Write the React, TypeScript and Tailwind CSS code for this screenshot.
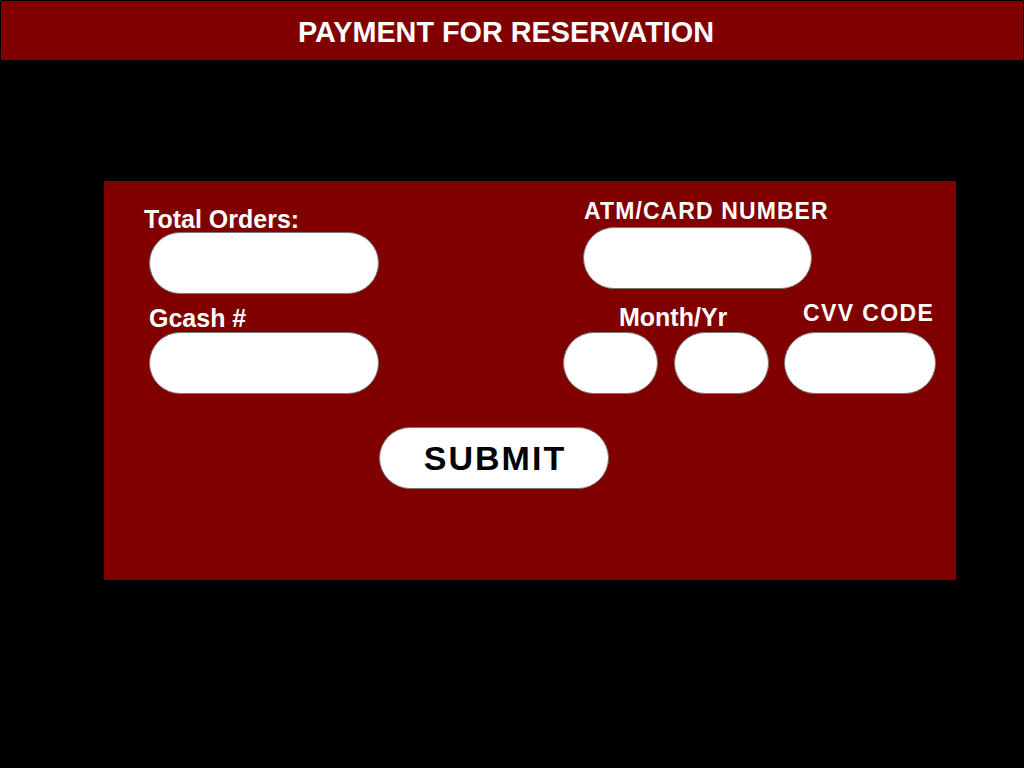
import React from "react";

const inputCls = "bg-white border border-[#777777] rounded-full h-[62px]";

export default function App() {
  return (
    <div
      className="w-[1024px] h-[768px] bg-black flex flex-col"
      style={{ fontFamily: '"Liberation Sans", Arial, sans-serif' }}
    >
      <header className="mx-px mt-px h-[59px] bg-[#800000] flex justify-center items-start pt-[15px] pr-[12px]">
        <h1 className="text-white font-bold text-[28.8px] leading-[32px]">PAYMENT FOR RESERVATION</h1>
      </header>

      <section className="mt-[121px] ml-[104px] w-[852px] h-[399px] bg-[#800000] flex flex-col">
        <div className="flex items-start">
          {/* left column */}
          <div className="w-[275px] pl-[40px] pt-[26px] flex flex-col items-start">
            <div className="text-white font-bold text-[25px] leading-[24px]">Total Orders:</div>
            <div className={`${inputCls} mt-px ml-[5px] w-[230px]`} />
            <div className="text-white font-bold text-[25px] leading-[24px] mt-[12px] ml-[5px]">Gcash #</div>
            <div className={`${inputCls} mt-[2px] ml-[5px] w-[230px]`} />
          </div>

          {/* right column */}
          <div className="ml-[184px] pt-[18px] flex flex-col items-start">
            <div className="text-white font-bold text-[23px] leading-[24px] tracking-[1.1px] ml-[21px]">ATM/CARD NUMBER</div>
            <div className={`${inputCls} mt-[4px] ml-[20px] w-[229px]`} />
            <div className="mt-[12px] flex items-end">
              <div className="flex flex-col items-start">
                <div className="text-white font-bold text-[25px] leading-[24px] ml-[56px]">Month/Yr</div>
                <div className="mt-[3px] flex gap-[16px]">
                  <div className={`${inputCls} w-[95px]`} />
                  <div className={`${inputCls} w-[95px]`} />
                </div>
              </div>
              <div className="ml-[15px] flex flex-col items-start">
                <div className="text-white font-bold text-[23px] leading-[24px] tracking-[1.4px] ml-[19px]">CVV CODE</div>
                <div className={`${inputCls} mt-[7px] w-[152px]`} />
              </div>
            </div>
          </div>
        </div>

        <button
          type="button"
          className="mt-[33px] ml-[275px] w-[230px] h-[62px] bg-white border border-[#777777] rounded-full flex items-center justify-center text-black font-bold text-[34px] leading-[36px] tracking-[2px] pl-[2px]"
        >
          SUBMIT
        </button>
      </section>
    </div>
  );
}
